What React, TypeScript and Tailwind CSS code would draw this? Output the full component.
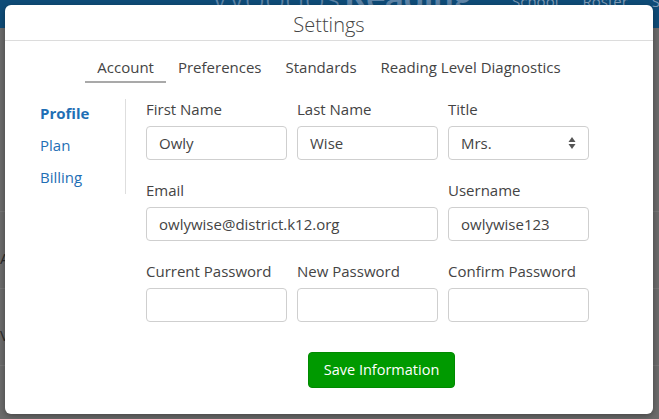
import React from "react";

const font = { fontFamily: "'Open Sans', Lato, sans-serif" };

type Field = { label: string; value?: string; wide?: boolean; select?: boolean };

const rows: Field[][] = [
  [
    { label: "First Name", value: "Owly" },
    { label: "Last Name", value: "Wise" },
    { label: "Title", value: "Mrs.", select: true },
  ],
  [
    { label: "Email", value: "owlywise@district.k12.org", wide: true },
    { label: "Username", value: "owlywise123" },
  ],
  [
    { label: "Current Password" },
    { label: "New Password" },
    { label: "Confirm Password" },
  ],
];

const tabs = ["Account", "Preferences", "Standards", "Reading Level Diagnostics"];

function SelectArrows() {
  return (
    <svg width="8" height="14" viewBox="0 0 8 14" className="shrink-0">
      <path d="M4 1 L7.5 6 H0.5 Z" fill="#555" />
      <path d="M4 13 L7.5 8 H0.5 Z" fill="#555" />
    </svg>
  );
}

function FormField({ f }: { f: Field }) {
  return (
    <div className={f.wide ? "w-[292px]" : "w-[141px]"}>
      <div className="text-[15px] leading-[20px] text-[#444]">{f.label}</div>
      <div className="mt-[7px] flex h-[34px] items-center justify-between rounded-[4px] border border-[#cfcfcf] bg-white px-[12px] text-[15px] text-[#444]">
        <span>{f.value ?? ""}</span>
        {f.select && <SelectArrows />}
      </div>
    </div>
  );
}

export default function App() {
  return (
    <div className="relative h-[419px] w-[659px] overflow-hidden bg-[#6b6b6b]" style={font}>
      {/* dimmed page behind the modal */}
      <div className="flex h-[28px] items-start bg-[#0f4c78]">
        <div className="-mt-[22px] ml-[210px] flex w-[240px] text-[36px] leading-[36px] text-[#5f85a8]" style={{ fontFamily: "Lato, sans-serif" }}>
          <span className="font-light">Woodos</span>
          <span className="ml-[4px] font-bold">Reading</span>
        </div>
        <div className="-mt-[9px] ml-[62px] flex gap-[24px] text-[15px] leading-[20px] text-[#7e9ab5]">
          <span>School</span>
          <span>Roster</span>
          <span>St</span>
        </div>
      </div>
      <div className="flex flex-col">
        <div className="mt-[183px] border-t border-[#767676]" />
        <div className="mt-[36px] text-[15px] leading-[20px] text-[#2a2a2a]">A</div>
        <div className="mt-[20px] border-t border-[#767676]" />
        <div className="mt-[36px] text-[15px] leading-[20px] text-[#2a2a2a]">V</div>
        <div className="mt-[20px] border-t border-[#767676]" />
      </div>

      {/* modal */}
      <div className="absolute left-[5px] top-[5px] flex h-[409px] w-[648px] flex-col rounded-[6px] bg-white shadow-[0_2px_6px_rgba(0,0,0,0.35)]">
        <div className="flex h-[36px] items-center justify-center border-b border-[#dcdcdc] pt-[4px] text-[20px] font-light text-[#444]">
          Settings
        </div>

        <div className="mt-[16px] flex justify-center">
          {tabs.map((t, i) => (
            <div
              key={t}
              className={
                i === 0
                  ? "border-b-2 border-[#a9a9a9] px-[12px] pb-[4px] text-[15px] leading-[20px] text-[#444]"
                  : "border-b-2 border-transparent px-[12px] pb-[4px] text-[15px] leading-[20px] text-[#444]"
              }
            >
              {t}
            </div>
          ))}
        </div>

        <div className="mt-[16px] flex">
          <div className="w-[121px] shrink-0 self-start border-r border-[#dedede] pb-[7px] pl-[35px] pt-[4px]">
            <div className="flex flex-col gap-[12px] text-[15px] leading-[20px] text-[#1f6fb5]">
              <span className="font-bold">Profile</span>
              <span>Plan</span>
              <span>Billing</span>
            </div>
          </div>

          <div className="ml-[20px] flex flex-col gap-[20px]">
            {rows.map((r, i) => (
              <div key={i} className="flex gap-[10px]">
                {r.map((f) => (
                  <FormField key={f.label} f={f} />
                ))}
              </div>
            ))}
            <div className="ml-[162px] mt-[10px]">
              <button className="h-[36px] w-[147px] rounded-[4px] border border-[#008a00] bg-[#009a00] text-[14.5px] text-white">
                Save Information
              </button>
            </div>
          </div>
        </div>
      </div>
    </div>
  );
}
